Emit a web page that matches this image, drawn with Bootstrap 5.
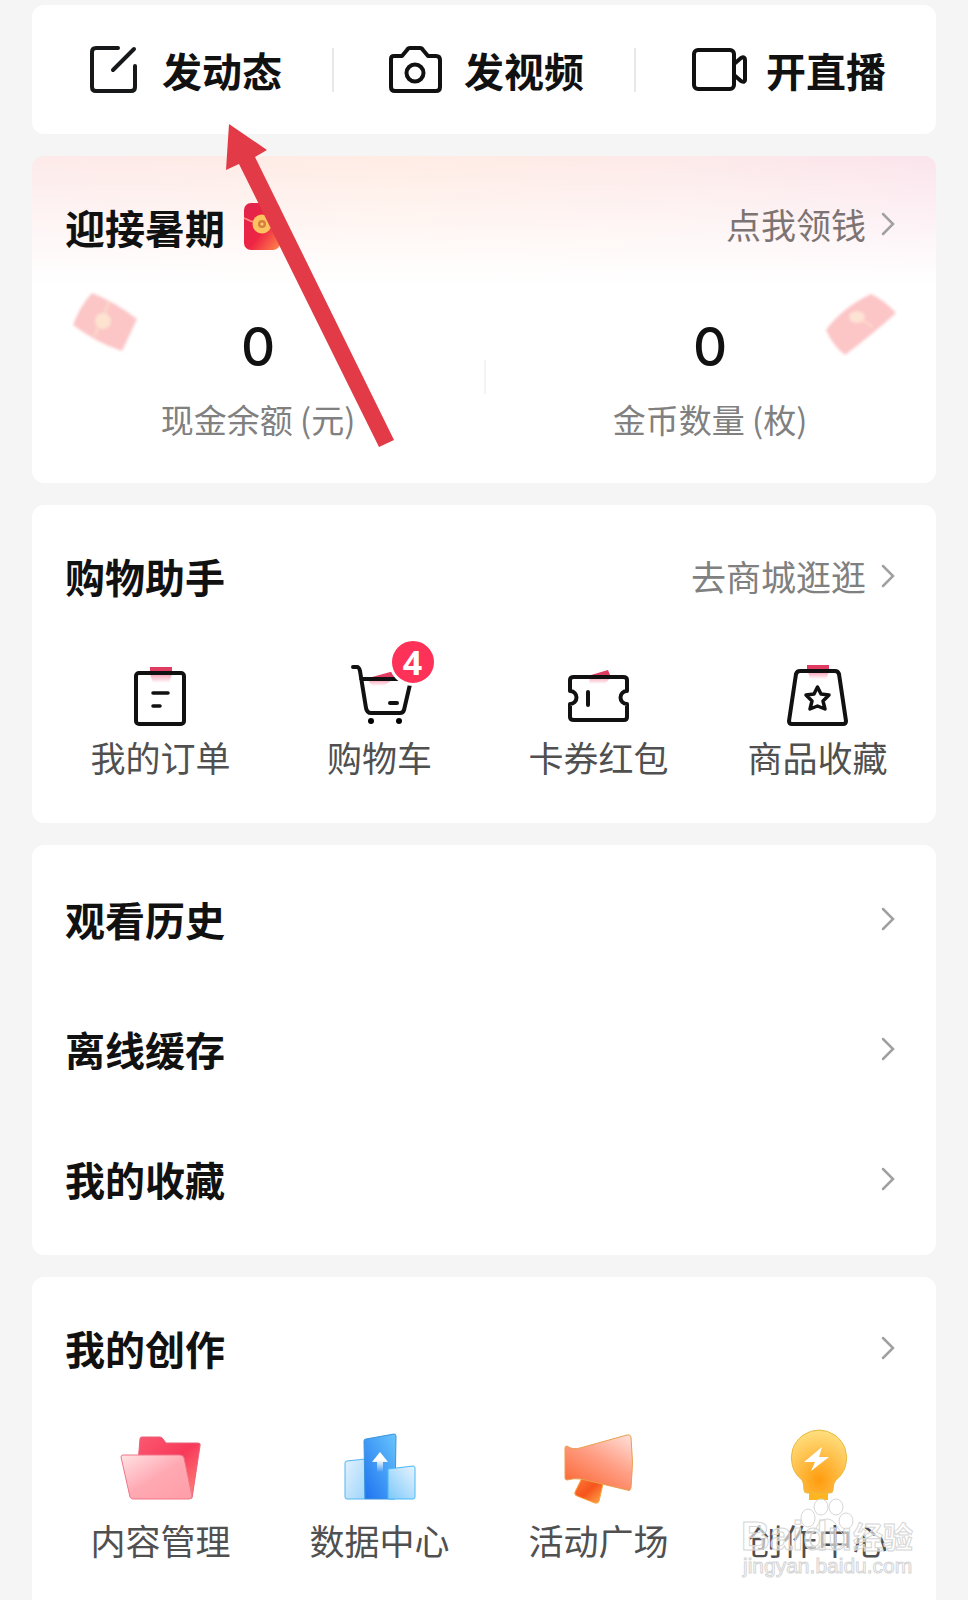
<!DOCTYPE html>
<html lang="zh-CN">
<head>
<meta charset="utf-8">
<meta name="viewport" content="width=device-width, initial-scale=1">
<title>我的</title>
<link rel="stylesheet" href="https://cdn.jsdelivr.net/npm/bootstrap@5.3.0/dist/css/bootstrap.min.css">
<style>
  body { background: #f5f5f5; color: #111; font-family: "Noto Sans CJK SC", sans-serif; }
  a, a:hover { color: inherit; text-decoration: none; }
  .page { padding: 5px 32px 0; gap: 22px; position: relative; }
  .panel { background: #fff; border-radius: 12px; position: relative; }
  .panel-last { border-radius: 12px 12px 0 0; }
  .post-bar { height: 129px; }
  .post-btn { gap: 20px; font-size: 40px; font-weight: 700; color: #111; background: none; border: 0; padding: 0 0 0 4px; line-height: 60px; }
  .post-btn svg { overflow: visible; }
  .post-rule { width: 2px; height: 44px; background: #e8e8e8; }
  .head { height: 144px; padding: 0 41px 2px 33px; }
  .head h2, .entry { font-size: 40px; font-weight: 700; line-height: 60px; margin: 0; }
  .more { font-size: 35px; line-height: 50px; color: #808080; gap: 15px; }
  .entries { padding: 9px 0 11px; }
  .entry { height: 130px; padding: 0 41px 0 33px; }
  .bonus { background: linear-gradient(180deg, rgba(255,255,255,0) 0, #fff 128px), linear-gradient(90deg, #fdeaea 0, #ffece4 40%, #fdeae9 70%, #fbe4ec 100%); }
  .bonus .more { color: #7c7472; padding-bottom: 7px; }
  .amounts { padding-bottom: 40px; }
  .amount { font-family: Inter, sans-serif; font-size: 53px; font-weight: 500; line-height: 64px; padding-top: 15px; }
  .amount-name { font-size: 33px; line-height: 48px; margin-top: 16px; color: #808080; }
  .amounts .mid { position: absolute; left: 50%; top: 204px; width: 2px; height: 34px; background: #f3f3f3; }
  .paper { position: absolute; top: 132px; }
  .paper-l { left: 36px; }
  .paper-r { right: 38px; }
  .tiles { padding: 11px 9px 41px 19px; }
  .tile { font-size: 35px; line-height: 50px; color: #505050; }
  .works { padding-top: 7px; }
  .works svg { margin-bottom: 7px; }
  .count { position: absolute; left: 50%; top: -22px; margin-left: 9px; width: 48px; height: 48px; border: 3px solid #fff; border-radius: 50%; background: #fe3159; color: #fff; font-family: "Open Sans", sans-serif; font-size: 34px; font-weight: 700; line-height: 43px; text-align: center; }
  .pointer { position: absolute; left: 222px; top: 120px; }
  .stamp { position: absolute; right: 46px; bottom: 12px; pointer-events: none; }
</style>
</head>
<body>
<main class="page d-flex flex-column min-vh-100">

  <section class="panel post-bar d-flex align-items-center">
    <button class="post-btn d-flex align-items-center justify-content-center flex-fill" type="button">
      <svg width="56" height="56" fill="none" stroke="#16181a" stroke-width="4" stroke-linecap="round" stroke-linejoin="round"><path d="M32 6H10Q6 6 6 10V45Q6 49 10 49H45Q49 49 49 45V24M27 28L48 7"/></svg>
      <span>发动态</span>
    </button>
    <span class="post-rule"></span>
    <button class="post-btn d-flex align-items-center justify-content-center flex-fill" type="button">
      <svg width="56" height="56" fill="none" stroke="#111" stroke-width="4" stroke-linejoin="round"><path d="M6 14H14L19 8Q20 6 22 6H32Q34 6 35 8L40 14H48Q52 14 52 18V45Q52 49 48 49H7Q3 49 3 45V17Q3 14 6 14"/><circle cx="27" cy="31" r="8.5"/></svg>
      <span>发视频</span>
    </button>
    <span class="post-rule"></span>
    <button class="post-btn d-flex align-items-center justify-content-center flex-fill" type="button">
      <svg width="56" height="56" fill="none" stroke="#111" stroke-width="4" stroke-linejoin="round"><rect x="4" y="8" width="40" height="39" rx="4"/><path d="M44 22L51 16Q55 14 55 18V38Q55 41 51 39L44 33"/></svg>
      <span>开直播</span>
    </button>
  </section>

  <section class="panel bonus">
    <div class="head d-flex align-items-center justify-content-between">
      <div class="d-flex align-items-center gap-3">
        <h2>迎接暑期</h2>
        <svg width="44" height="52" viewBox="0 0 44 52">
          <defs><linearGradient id="env" x1="0" y1="0" x2="1" y2="1"><stop offset="0" stop-color="#e0244c"/><stop offset=".55" stop-color="#ee2444"/><stop offset="1" stop-color="#ff8a4c"/></linearGradient></defs>
          <rect x="3" y="2" width="36" height="47" rx="7" fill="url(#env)"/>
          <path d="M3 17Q21 27 39 17" fill="none" stroke="#ff8c80" stroke-width="1.5"/>
          <circle cx="21" cy="23" r="9.500" fill="#fbc462"/><circle cx="21" cy="23" r="4" fill="#d9813a"/><circle cx="21" cy="23" r="1.500" fill="#fbd27a"/>
        </svg>
      </div>
      <a class="more d-flex align-items-center" href="#"><span>点我领钱</span>
        <svg width="14" height="24" fill="none" stroke="#a0a0a4" stroke-width="2.500" stroke-linecap="round"><path d="M2 2L12 12L2 22"/></svg></a>
    </div>
    <div class="amounts row g-0 text-center">
      <div class="col-6"><div class="amount">0</div><div class="amount-name">现金余额 (元)</div></div>
      <span class="mid"></span>
      <div class="col-6"><div class="amount">0</div><div class="amount-name">金币数量 (枚)</div></div>
    </div>
    <svg class="paper paper-l" width="76" height="68" viewBox="0 0 76 68">
      <defs><filter id="soft" x="-20%" y="-20%" width="140%" height="140%"><feGaussianBlur stdDeviation="1.800"/></filter></defs>
      <g filter="url(#soft)"><path d="M24 5Q47 14 69 31L54 63Q29 55 5 37Q12 18 24 5Z" fill="#fcc5c6"/><path d="M41 13L35 30L26 48" fill="none" stroke="#fddcc8" stroke-width="2"/><circle cx="35" cy="33" r="8" fill="#fde3d0"/></g>
    </svg>
    <svg class="paper paper-r" width="78" height="68" viewBox="0 0 78 68">
      <g filter="url(#soft)"><path d="M51 6Q64 12 76 25Q54 45 25 67Q13 58 6 42Q22 20 51 6Z" fill="#fcc5c6"/><ellipse cx="37" cy="29" rx="8" ry="6" fill="#fde3d4"/><path d="M42 32L53 39" stroke="#fddcc8" stroke-width="2"/></g>
    </svg>
  </section>

  <section class="panel">
    <div class="head d-flex align-items-center justify-content-between">
      <h2>购物助手</h2>
      <a class="more d-flex align-items-center" href="#"><span>去商城逛逛</span>
        <svg width="14" height="24" fill="none" stroke="#a0a0a0" stroke-width="2.500" stroke-linecap="round"><path d="M2 2L12 12L2 22"/></svg></a>
    </div>
    <div class="tiles d-flex text-center">
      <a class="tile w-25" href="#">
        <svg class="d-block mx-auto" width="72" height="72" viewBox="0 0 72 72">
          <defs><linearGradient id="glow" x1="0" y1="0" x2="0" y2="1"><stop offset="0" stop-color="#f23d66" stop-opacity=".5"/><stop offset="1" stop-color="#f23d66" stop-opacity="0"/></linearGradient></defs>
          <path d="M25 7H47V13H25Z" fill="#e03b60"/><path d="M25 14H47L44 23H28Z" fill="url(#glow)"/>
          <g fill="none" stroke="#111" stroke-width="4" stroke-linecap="round"><rect x="11" y="13" width="48" height="51" rx="3"/><path d="M28 33H43M28 46H35" stroke-width="3.500"/></g>
        </svg>我的订单</a>
      <a class="tile w-25 position-relative" href="#">
        <svg class="d-block mx-auto" width="72" height="72" viewBox="0 0 72 72">
          <path d="M28 17L50 11V17Z" fill="#e03b60"/><path d="M24 20H48L40 26H28Z" fill="url(#glow)"/>
          <g fill="none" stroke="#111" stroke-width="4" stroke-linecap="round" stroke-linejoin="round"><path d="M9 7H13Q15 7 16 11L22 48Q23 53 27 53H56Q59 53 60 50L67 20M17 19H60M46 43H53"/></g>
          <circle cx="27" cy="61" r="3"/><circle cx="55" cy="61" r="3"/>
        </svg>购物车<span class="count">4</span></a>
      <a class="tile w-25" href="#">
        <svg class="d-block mx-auto" width="72" height="72" viewBox="0 0 72 72">
          <path d="M28 15L45 10L47 15Z" fill="#e03b60"/><path d="M27 17H48L42 24H26Z" fill="url(#glow)"/>
          <path d="M10 17H60Q64 17 64 20V31A6.500 6.500 0 0 0 64 44V57Q64 60 61 60H11Q7 60 7 57V44A6.500 6.500 0 0 0 7 31V20Q7 17 11 17M25 32V45" fill="none" stroke="#111" stroke-width="4" stroke-linecap="round" stroke-linejoin="round"/>
        </svg>卡券红包</a>
      <a class="tile w-25" href="#">
        <svg class="d-block mx-auto" width="72" height="72" viewBox="0 0 72 72">
          <path d="M25 5H47V11H25Z" fill="#e03b60"/><path d="M26 12H47L44 19H28Z" fill="url(#glow)"/>
          <g fill="none" stroke="#111" stroke-width="4" stroke-linejoin="round"><path d="M18 11H53Q56 11 57 14L64 61Q64 64 61 64H10Q7 64 7 61L14 14Q15 11 18 11Z"/><path d="M35.500 27L39 34L47 35L41 41L43 49L35.500 46L28 49L30 41L24 35L32 34Z" stroke-width="3.500"/></g>
        </svg>商品收藏</a>
    </div>
  </section>

  <nav class="panel entries">
    <a class="entry d-flex align-items-center justify-content-between" href="#">观看历史 <svg width="14" height="24" fill="none" stroke="#a0a0a0" stroke-width="2.500" stroke-linecap="round"><path d="M2 2L12 12L2 22"/></svg></a>
    <a class="entry d-flex align-items-center justify-content-between" href="#">离线缓存 <svg width="14" height="24" fill="none" stroke="#a0a0a0" stroke-width="2.500" stroke-linecap="round"><path d="M2 2L12 12L2 22"/></svg></a>
    <a class="entry d-flex align-items-center justify-content-between" href="#">我的收藏 <svg width="14" height="24" fill="none" stroke="#a0a0a0" stroke-width="2.500" stroke-linecap="round"><path d="M2 2L12 12L2 22"/></svg></a>
  </nav>

  <section class="panel panel-last flex-grow-1">
    <a class="head d-flex align-items-center justify-content-between" href="#">
      <h2>我的创作</h2>
      <svg width="14" height="24" fill="none" stroke="#a0a0a0" stroke-width="2.500" stroke-linecap="round"><path d="M2 2L12 12L2 22"/></svg>
    </a>
    <div class="tiles works d-flex text-center pb-0">
      <a class="tile w-25" href="#">
        <svg class="d-block mx-auto" width="84" height="80" viewBox="0 0 84 80">
          <defs>
            <linearGradient id="fb" x1="0" y1="0" x2="1" y2="1"><stop offset="0" stop-color="#fb5a72"/><stop offset=".5" stop-color="#f7395a"/><stop offset="1" stop-color="#ff8a7a"/></linearGradient>
            <linearGradient id="ff" x1="0" y1="0" x2="1" y2="1"><stop offset="0" stop-color="#ffe3e4"/><stop offset=".5" stop-color="#ffa9b3"/><stop offset="1" stop-color="#ff9da6"/></linearGradient>
          </defs>
          <path d="M21 11Q21 9 23 9H41Q43 9 44 11L47 15H79Q82 15 81 18L73 70H16Z" fill="url(#fb)" stroke="#e8617a"/>
          <path d="M4 27H61Q64 27 65 30L73 68Q73 71 70 71H14Q12 71 11 69L2 29Q2 27 4 27Z" fill="url(#ff)" stroke="#f1748a"/>
        </svg>内容管理</a>
      <a class="tile w-25" href="#">
        <svg class="d-block mx-auto" width="84" height="80" viewBox="0 0 84 80">
          <defs>
            <linearGradient id="bm" x1="1" y1="0" x2="0" y2="1"><stop offset="0" stop-color="#68c5fc"/><stop offset="1" stop-color="#1d72f0"/></linearGradient>
            <linearGradient id="bs" x1="0" y1="0" x2="1" y2="1"><stop offset="0" stop-color="#e2f1fd"/><stop offset="1" stop-color="#9fd6fb"/></linearGradient>
            <linearGradient id="br" x1="1" y1="0" x2="0" y2="1"><stop offset="0" stop-color="#e8f4fe"/><stop offset="1" stop-color="#7cc8fb"/></linearGradient>
            <linearGradient id="ar" x1="0" y1="0" x2="0" y2="1"><stop offset=".4" stop-color="#fff"/><stop offset="1" stop-color="#fff" stop-opacity="0"/></linearGradient>
          </defs>
          <path d="M9 33L27 31V71H9Q7 71 7 69V35Q7 33 9 33Z" fill="url(#bs)" stroke="#52b6ef"/>
          <path d="M28 11L56 6Q58 6 58 8L57 71H27L26 13Q26 11 28 11Z" fill="url(#bm)" stroke="#3c93db"/>
          <path d="M50 41L75 38Q77 38 77 40V69Q77 71 75 71H50Z" fill="url(#br)" stroke="#46b9f7"/>
          <path d="M42 24L50 34H45V44H39V34H34Z" fill="url(#ar)"/>
        </svg>数据中心</a>
      <a class="tile w-25" href="#">
        <svg class="d-block mx-auto" width="84" height="80" viewBox="0 0 84 80">
          <defs>
            <linearGradient id="hn" x1="1" y1="0" x2=".3" y2="1"><stop offset="0" stop-color="#ffe2dc"/><stop offset=".5" stop-color="#ff9f86"/><stop offset="1" stop-color="#fb6d3c"/></linearGradient>
            <linearGradient id="hh" x1="0" y1="0" x2="1" y2="1"><stop offset="0" stop-color="#ff7a3c"/><stop offset=".5" stop-color="#f6541c"/><stop offset="1" stop-color="#ffae4c"/></linearGradient>
          </defs>
          <path d="M25 50L46 56L42 73Q41 76 38 75L20 68Q17 67 18 64Z" fill="url(#hh)" stroke="#f7a23c"/>
          <path d="M10 18Q15 22 23 20L70 7Q73 6 74 9Q77 35 74 60Q73 64 70 62L24 51Q17 50 10 52Q8 52 8 50V20Q8 18 10 18Z" fill="url(#hn)" stroke="#e9a04e"/>
        </svg>活动广场</a>
      <a class="tile w-25" href="#">
        <svg class="d-block mx-auto" width="84" height="80" viewBox="0 0 84 80">
          <defs><radialGradient id="bu" cx=".5" cy=".8" r=".8"><stop offset="0" stop-color="#ff9c0e"/><stop offset=".4" stop-color="#ffb63a"/><stop offset="1" stop-color="#ffdf80"/></radialGradient></defs>
          <path d="M33 64H52V72H33Z" fill="#ffb51f"/>
          <path d="M43 2A28 28 0 0 1 60 52Q57 55 57 62Q57 65 54 65H31Q28 65 28 62Q28 55 26 52A28 28 0 0 1 43 2Z" fill="url(#bu)" stroke="#e8b93c"/>
          <path d="M46 19L28 34H39L35 43L53 29H43Z" fill="#fff"/>
        </svg>创作中心</a>
    </div>
  </section>

  <svg class="pointer" width="176" height="330" viewBox="222 120 176 330"><path d="M229 124L267 150L255 157L394 440L379 447L239 164L226 170Z" fill="#e23a46"/></svg>

  <svg class="stamp" width="184" height="90" viewBox="738 1498 184 90" fill="#fff" fill-opacity=".6" stroke="#d6d6d6" stroke-width="1">
    <text x="741" y="1550" font-family="Liberation Sans, sans-serif" font-size="40" font-weight="700">Baidu</text>
    <text x="853" y="1548" font-family="Noto Sans CJK SC, sans-serif" font-size="30" font-weight="700">经验</text>
    <text x="743" y="1573" font-family="Liberation Sans, sans-serif" font-size="21">jingyan.baidu.com</text>
    <ellipse cx="808" cy="1518" rx="7" ry="9"/><ellipse cx="821" cy="1507" rx="7" ry="8"/><ellipse cx="836" cy="1507" rx="7" ry="8"/><ellipse cx="846" cy="1521" rx="7" ry="8"/>
    <path d="M827 1519Q834 1519 838 1528Q848 1538 842 1546Q837 1552 827 1549Q817 1552 812 1546Q806 1538 816 1528Q820 1519 827 1519Z" fill="none"/>
  </svg>
</main>
<script src="https://cdn.jsdelivr.net/npm/bootstrap@5.3.0/dist/js/bootstrap.bundle.min.js"></script>
</body>
</html>
